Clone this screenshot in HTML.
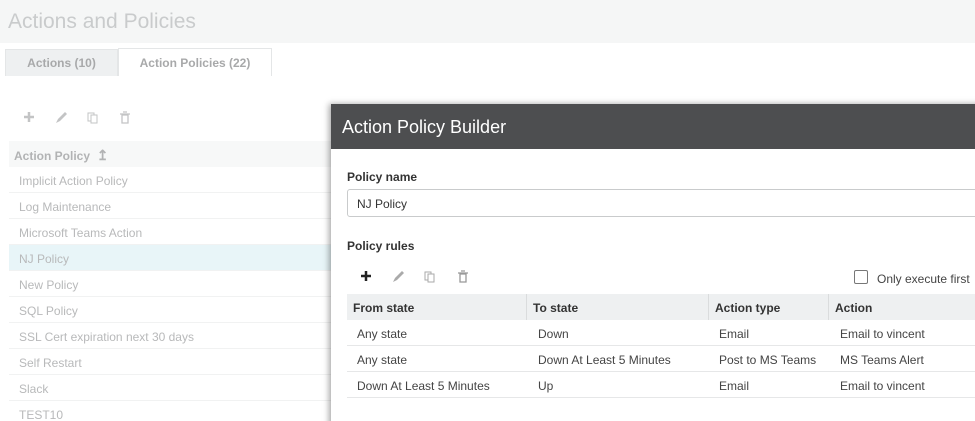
<!DOCTYPE html>
<html><head><style>
*{margin:0;padding:0;box-sizing:border-box}
html,body{width:975px;height:421px;overflow:hidden}
body{background:#fff;font-family:"Liberation Sans",sans-serif;position:relative;color:#444}
.a{position:absolute;white-space:nowrap}
.top{left:0;top:0;width:975px;height:43px;background:#f5f6f6}
.title{left:8px;top:10px;font-size:21px;color:#c9cbcc}
.tab1{left:5px;top:49px;width:113px;height:27px;background:#eef0f1;border:1px solid #e4e6e7;border-bottom:none;font-size:12px;font-weight:bold;color:#a8a9aa;text-align:center;line-height:27px}
.tab2{left:118px;top:48px;width:154px;height:28px;background:#fff;border:1px solid #e4e6e7;border-bottom:none;font-size:12px;font-weight:bold;color:#a8a9aa;text-align:center;line-height:28px}
.lrow{left:9px;width:322px;height:26px;border-bottom:1px solid #f1f2f2;font-size:12px;color:#b8b9ba;line-height:28px;padding-left:10px}
.dlg{left:331px;top:104px;width:660px;height:330px;background:#fff;box-shadow:-2px 0 6px rgba(0,0,0,.35)}
.dh{left:331px;top:104px;width:660px;height:45px;background:#4d4e50;color:#fff;font-size:18px;line-height:46px;padding-left:11px}
.lbl{font-size:12px;font-weight:bold;color:#333}
.inp{left:347px;top:189px;width:640px;height:28px;border:1px solid #c9cbcc;border-radius:3px;font-size:12px;line-height:28px;padding-left:9px;color:#333}
.th{top:294px;height:26px;background:#eef0f1;font-size:12px;font-weight:bold;color:#333;line-height:28px;padding-left:6px;border-right:1px solid #dadcdd}
.tr{left:347px;width:640px;height:26px;border-bottom:1px solid #e6e7e8;font-size:12px;color:#444;line-height:29px}
.tr span{position:absolute;top:0}
</style></head><body>
<div class="a top"></div>
<div class="a title">Actions and Policies</div>
<div class="a tab1">Actions (10)</div>
<div class="a tab2">Action Policies (22)</div>
<svg class="a" style="left:20px;top:109px" width="120" height="16" viewBox="0 0 120 16">
<path d="M4 8h10M9 3v10" stroke="#c3c4c5" stroke-width="2.5"/>
<path d="M36 14l2-4 7-7 2 2-7 7z" fill="#c3c4c5"/>
<rect x="68" y="4" width="6" height="8" fill="none" stroke="#c3c4c5"/><rect x="71" y="6" width="6" height="8" fill="#fff" stroke="#c3c4c5"/>
<path d="M100 5h10M102 6h6v8h-6z M103 3h4" fill="none" stroke="#c3c4c5" stroke-width="1.3"/>
</svg>
<div class="a" style="left:9px;top:141px;width:322px;height:26px;background:#f7f8f8;font-size:12px;font-weight:bold;color:#b2b3b4;line-height:28px;padding-left:5px">Action Policy &nbsp;<span style="font-size:14px">&#8613;</span></div>
<div class="a lrow" style="top:167px">Implicit Action Policy</div>
<div class="a lrow" style="top:193px">Log Maintenance</div>
<div class="a lrow" style="top:219px">Microsoft Teams Action</div>
<div class="a lrow" style="top:245px;background:#e8f5f8">NJ Policy</div>
<div class="a lrow" style="top:271px">New Policy</div>
<div class="a lrow" style="top:297px">SQL Policy</div>
<div class="a lrow" style="top:323px">SSL Cert expiration next 30 days</div>
<div class="a lrow" style="top:349px">Self Restart</div>
<div class="a lrow" style="top:375px">Slack</div>
<div class="a lrow" style="top:401px">TEST10</div>
<div class="a dlg"></div>
<div class="a dh">Action Policy Builder</div>
<div class="a lbl" style="left:347px;top:170px">Policy name</div>
<div class="a inp">NJ Policy</div>
<div class="a lbl" style="left:347px;top:239px">Policy rules</div>
<svg class="a" style="left:358px;top:268px" width="120" height="16" viewBox="0 0 120 16">
<path d="M3 8h10M8 3v10" stroke="#222" stroke-width="2.5"/>
<path d="M35 14l2-4 7-7 2 2-7 7z" fill="#aaa"/>
<rect x="67" y="4" width="6" height="8" fill="none" stroke="#aaa"/><rect x="70" y="6" width="6" height="8" fill="#fff" stroke="#aaa"/>
<path d="M100 5h10M102 6h6v8h-6z M103 3h4" fill="none" stroke="#999" stroke-width="1.3"/>
</svg>
<div class="a" style="left:854px;top:270px;width:14px;height:14px;border:1px solid #777;border-radius:2px"></div>
<div class="a" style="left:877px;top:272px;font-size:12px;color:#444">Only execute first</div>
<div class="a th" style="left:347px;width:180px">From state</div>
<div class="a th" style="left:527px;width:182px">To state</div>
<div class="a th" style="left:709px;width:120px">Action type</div>
<div class="a th" style="left:829px;width:160px;border-right:none">Action</div>
<div class="a tr" style="top:320px"><span style="left:10px">Any state</span><span style="left:191px">Down</span><span style="left:372px">Email</span><span style="left:493px">Email to vincent</span></div>
<div class="a tr" style="top:346px"><span style="left:10px">Any state</span><span style="left:191px">Down At Least 5 Minutes</span><span style="left:372px">Post to MS Teams</span><span style="left:493px">MS Teams Alert</span></div>
<div class="a tr" style="top:372px"><span style="left:10px">Down At Least 5 Minutes</span><span style="left:191px">Up</span><span style="left:372px">Email</span><span style="left:493px">Email to vincent</span></div>
</body></html>
